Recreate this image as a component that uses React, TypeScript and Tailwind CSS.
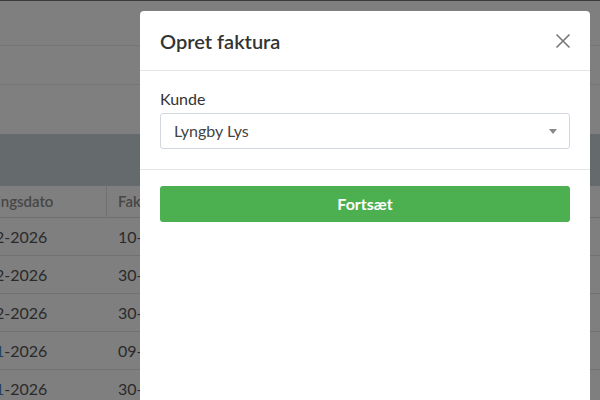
import React from 'react'

const rows = [
  { a: '2-2026', b: '10-03-2026' },
  { a: '2-2026', b: '30-03-2026' },
  { a: '2-2026', b: '30-03-2026' },
  { a: '1-2026', b: '09-02-2026', link: true },
  { a: '1-2026', b: '30-12-2025', link: true },
]

const Background: React.FC = () => (
  <div className="w-full h-full bg-white">
    <div className="h-px bg-[#777]" />
    <div className="h-[45px] border-b border-[#ececec]" />
    <div className="h-[39px] border-b border-[#ececec]" />
    <div className="h-[49px]" />
    <div className="h-[52px] bg-[#cad4da]" />
    <div className="flex h-[32px] border-b border-[#dcdcdc] text-[15px] font-semibold text-[#8e8e8e]">
      <div className="w-[107px] border-r border-[#e2e2e2] flex items-center overflow-hidden">
        <span className="-ml-[3px] whitespace-nowrap">ingsdato</span>
      </div>
      <div className="flex-1 flex items-center pl-[11px]">Fakturadato</div>
    </div>
    {rows.map((r, i) => (
      <div key={i} className="flex h-[38px] border-b border-[#e4e4e4] text-[16px] text-[#555]">
        <div className="w-[107px] flex items-center overflow-hidden">
          <span className="-ml-[5px] whitespace-nowrap">
            <span className={r.link ? 'text-[#4a7bb0]' : ''}>{r.a.slice(0, 1)}</span>
            {r.a.slice(1)}
          </span>
        </div>
        <div className="flex-1 flex items-center pl-[11px]">{r.b}</div>
      </div>
    ))}
  </div>
)

export default function App() {
  return (
    <div className="relative w-[600px] h-[400px] overflow-hidden font-['Lato','Liberation_Sans',sans-serif]">
      <Background />
      <div className="absolute inset-0 bg-black/50" />

      <div className="absolute left-[140px] top-[11px] w-[450px] h-[420px] bg-white rounded-t-[4px]">
        <div className="h-[60px] border-b border-[#e5e5e5] flex items-center justify-between pl-5 pr-[19px]">
          <h2 className="text-[20px] font-semibold text-[#333]">Opret faktura</h2>
          <button className="text-[#777]">
            <svg width="16" height="16" viewBox="0 0 16 16" fill="none" stroke="currentColor" strokeWidth="1.6">
              <path d="M1.5 1.5 L14.5 14.5 M14.5 1.5 L1.5 14.5" />
            </svg>
          </button>
        </div>

        <div className="px-5 pt-[18px] pb-5 border-b border-[#e5e5e5]">
          <label className="block text-[16px] leading-5 text-[#333] mb-1">Kunde</label>
          <div className="h-[36px] border border-[#d2d6de] rounded-[3px] flex items-center justify-between pl-[13px] pr-[12px]">
            <span className="text-[16px] text-[#444]">Lyngby Lys</span>
            <svg width="8" height="5" viewBox="0 0 8 5" className="fill-[#888]">
              <path d="M0 0 H8 L4 5 Z" />
            </svg>
          </div>
        </div>

        <div className="px-5 pt-4">
          <button className="w-full h-[36px] bg-[#4caf50] rounded-[3px] text-white font-bold text-[16px]">
            Fortsæt
          </button>
        </div>
      </div>
    </div>
  )
}
